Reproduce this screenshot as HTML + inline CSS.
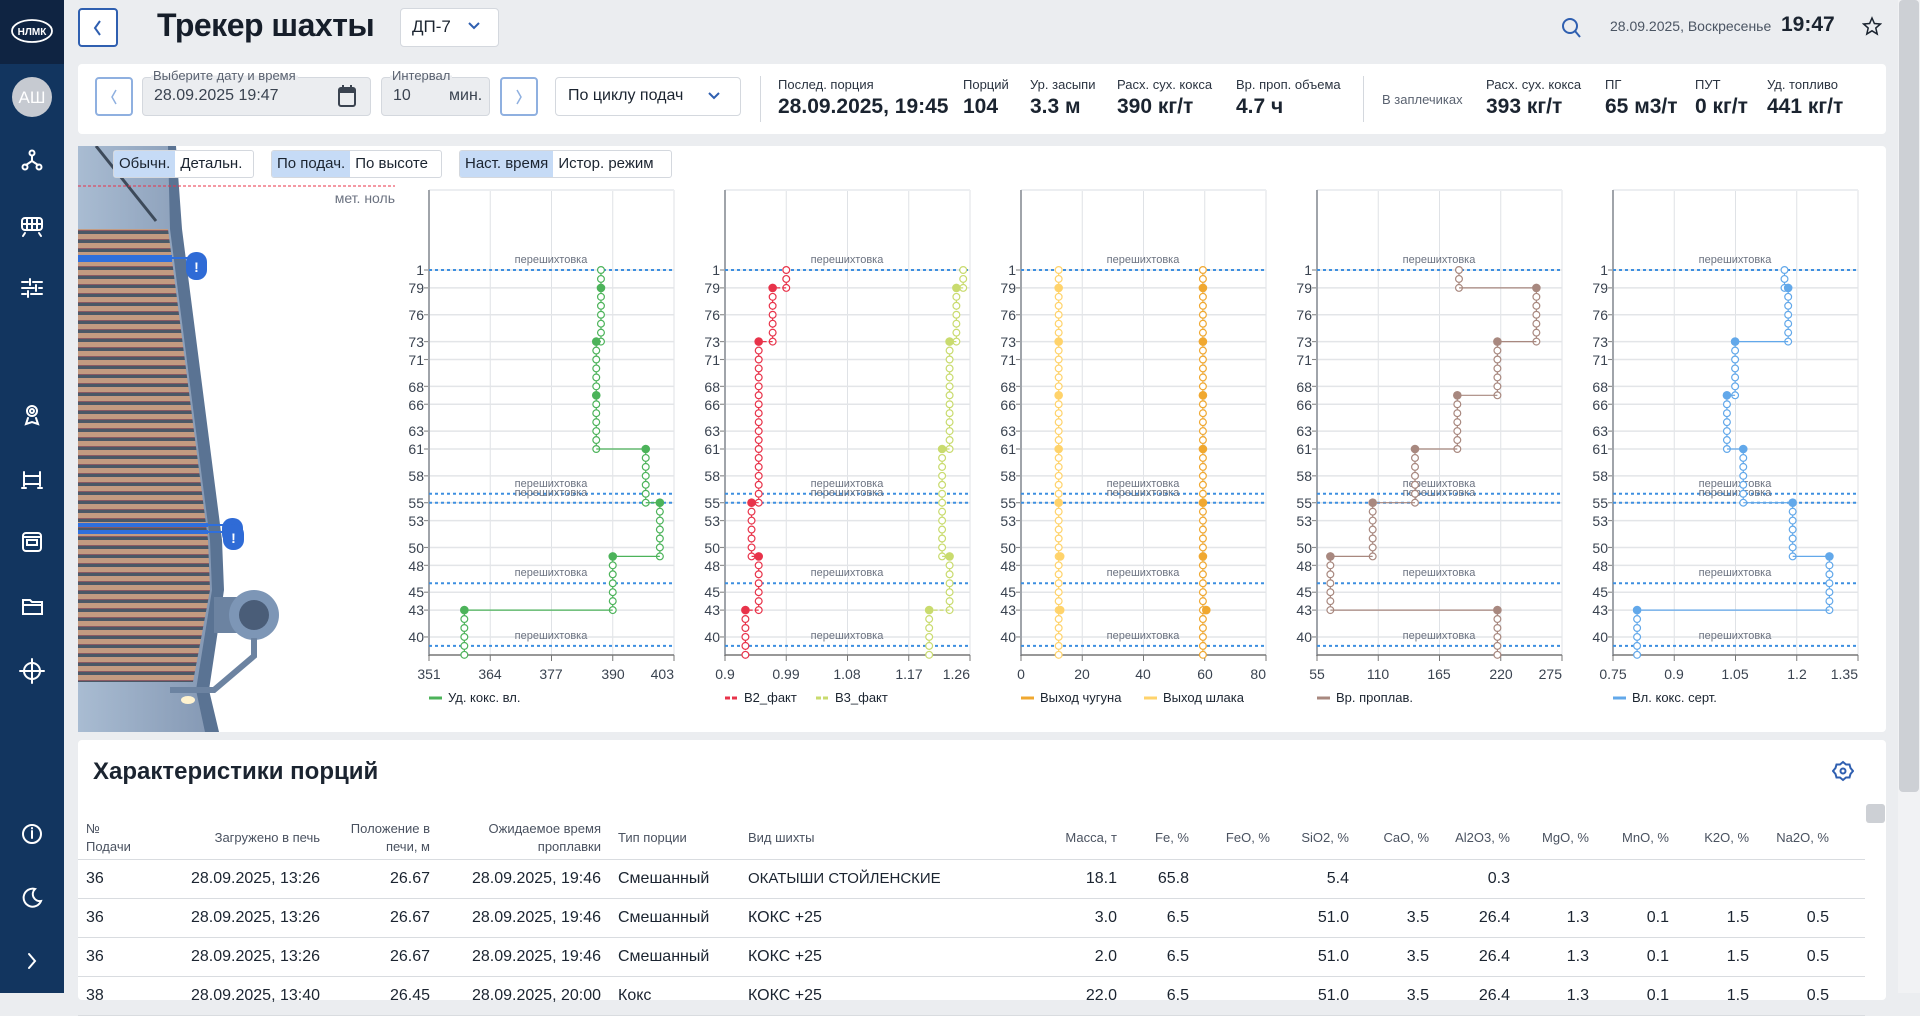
<!DOCTYPE html>
<html><head><meta charset="utf-8">
<style>
*{box-sizing:border-box;margin:0;padding:0}
body{width:1920px;height:993px;overflow:hidden;background:#ebedf0;font-family:"Liberation Sans Narrow","Liberation Sans",sans-serif;color:#1b2430;position:relative}
.abs{position:absolute}
.side{left:0;top:0;width:64px;height:993px;background:#12355f}
.logo{left:0;top:0;width:64px;height:64px;background:#0f2442}
.card{background:#fff;border-radius:4px}
.btnb{border:2px solid #2f5fb0;border-radius:4px;background:#fff}
.lbl{font-size:13px;color:#2a3340}
.val{font-size:21px;font-weight:bold;color:#1b2430}
.tg{position:absolute;top:150px;height:28px;border:1px solid #d4d8de;border-radius:3px;background:#fff;font-size:15px;display:flex;overflow:hidden;z-index:2}
.tg span{padding:0 5px;line-height:26px;white-space:nowrap}
.tg span.on{background:#c6dbf6}
th,td{font-weight:normal;white-space:nowrap;overflow:hidden}
.tbl{position:absolute;left:78px;top:817px;width:1787px;border-collapse:collapse;table-layout:fixed}
.tbl th{font-size:13px;color:#4a5260;height:42px;border-bottom:1px solid #d9dce0;vertical-align:middle;line-height:18px}
.tbl td{font-size:16px;height:39px;border-bottom:1px solid #d9dce0}
.r{text-align:right}.l{text-align:left}
</style></head><body>
<div class="abs side"></div>
<div class="abs logo"></div>
<svg class="abs" style="left:0;top:0" width="64" height="993">
<ellipse cx="32" cy="31" rx="20" ry="11" fill="none" stroke="#fff" stroke-width="1.8"/>
<text x="32" y="35" fill="#fff" font-size="10" font-weight="bold" text-anchor="middle" font-family="Liberation Sans">НЛМК</text>
<circle cx="32" cy="97" r="20" fill="#c6cad1"/>
<text x="32" y="103" fill="#fff" font-size="17" text-anchor="middle" font-family="Liberation Sans">АШ</text>
<g stroke="#fff" stroke-width="2" fill="none" stroke-linecap="round">
<circle cx="32" cy="153" r="2.5"/><circle cx="25" cy="167" r="2.5"/><circle cx="39" cy="167" r="2.5"/><path d="M32 156v5l-6 4M32 161l6 4"/>
<rect x="22" y="218" width="20" height="12" rx="3"/><path d="M22 224h20M27 218v12M32 218v12M37 218v12M25 233l-2 3M39 233l2 3"/>
<path d="M22 282h6M33 282h9M22 288h12M39 288h3M22 294h4M31 294h11M30 279v6M36 285v6M28 291v6"/>
<circle cx="32" cy="411" r="5"/><circle cx="32" cy="411" r="2"/><path d="M28 418l-2 6 6-2 6 2-2-6"/>
<path d="M24 472v14M40 472v14M24 476h16M24 484h16M22 488h4M38 488h4"/>
<rect x="23" y="533" width="18" height="18" rx="3"/><rect x="27" y="540" width="10" height="5"/><path d="M23 537h18"/>
<path d="M23 600h7l2 2h10v12H23z M23 605h19"/>
<circle cx="32" cy="671" r="8"/><path d="M32 659v24M20 671h24"/>
<circle cx="32" cy="834" r="9"/><path d="M32 831v7M32 828v0.5"/>
<path d="M35 889a9 9 0 1 0 6 12a7 7 0 0 1-6-12z"/>
<path d="M29 954l6 7-6 7"/>
</g></svg>

<div class="abs btnb" style="left:78px;top:8px;width:40px;height:39px"></div>
<svg class="abs" style="left:78px;top:8px" width="40" height="39"><path d="M22 13l-5 7 5 7" stroke="#2f5fb0" stroke-width="2" fill="none"/></svg>
<div class="abs" style="left:157px;top:7px;font-size:32px;font-weight:bold;color:#161e2a;letter-spacing:-0.5px">Трекер шахты</div>
<div class="abs card" style="left:400px;top:8px;width:99px;height:39px;border:1px solid #d4d8de"></div>
<div class="abs" style="left:412px;top:17px;font-size:17px">ДП-7</div>
<svg class="abs" style="left:466px;top:20px" width="16" height="12"><path d="M3 3l5 5 5-5" stroke="#2f5fb0" stroke-width="2" fill="none"/></svg>
<svg class="abs" style="left:1560px;top:16px" width="24" height="24"><circle cx="10" cy="10" r="7" stroke="#2f5fb0" stroke-width="2" fill="none"/><path d="M15 15l5 6" stroke="#2f5fb0" stroke-width="2"/></svg>
<div class="abs" style="left:1610px;top:18px;font-size:14px;color:#4b5563">28.09.2025, Воскресенье</div>
<div class="abs" style="left:1781px;top:13px;font-size:21px;font-weight:bold">19:47</div>
<svg class="abs" style="left:1862px;top:16px" width="20" height="20"><path d="M10 2l2.4 5.5 6 .5-4.6 4 1.4 6-5.2-3.2-5.2 3.2 1.4-6-4.6-4 6-.5z" fill="none" stroke="#1b2430" stroke-width="1.5"/></svg>
<div class="abs" style="left:1898px;top:0;width:22px;height:993px;background:#f1f2f4"></div>
<div class="abs" style="left:1899px;top:0;width:20px;height:792px;background:#cdd0d5;border-radius:4px"></div>

<div class="abs card" style="left:78px;top:64px;width:1808px;height:70px"></div>
<div class="abs" style="left:95px;top:77px;width:38px;height:39px;border:2px solid #8fb0e0;border-radius:4px"></div>
<svg class="abs" style="left:95px;top:77px" width="38" height="39"><path d="M21 13l-4 7 4 7" stroke="#8fb0e0" stroke-width="1.5" fill="none"/></svg>
<div class="abs" style="left:142px;top:77px;width:229px;height:39px;background:#ebedf0;border:1px solid #d4d8de;border-radius:4px"></div>
<div class="abs" style="left:151px;top:68px;font-size:13px;color:#5a6270;background:linear-gradient(#fff 50%,#ebedf0 50%);padding:0 2px">Выберите дату и время</div>
<div class="abs" style="left:154px;top:87px;font-size:16px;color:#3a4350">28.09.2025 19:47</div>
<svg class="abs" style="left:337px;top:84px" width="20" height="24"><rect x="2" y="4" width="16" height="18" rx="2" fill="none" stroke="#3a4350" stroke-width="2"/><rect x="2" y="4" width="16" height="5" fill="#3a4350"/><path d="M6 1v5M14 1v5" stroke="#3a4350" stroke-width="2"/></svg>
<div class="abs" style="left:381px;top:77px;width:109px;height:39px;background:#ebedf0;border:1px solid #d4d8de;border-radius:4px"></div>
<div class="abs" style="left:390px;top:68px;font-size:13px;color:#5a6270;background:linear-gradient(#fff 50%,#ebedf0 50%);padding:0 2px">Интервал</div>
<div class="abs" style="left:393px;top:87px;font-size:16px;color:#3a4350">10</div>
<div class="abs" style="left:449px;top:87px;font-size:16px;color:#3a4350">мин.</div>
<div class="abs" style="left:500px;top:77px;width:38px;height:39px;border:2px solid #8fb0e0;border-radius:4px"></div>
<svg class="abs" style="left:500px;top:77px" width="38" height="39"><path d="M17 13l4 7-4 7" stroke="#8fb0e0" stroke-width="1.5" fill="none"/></svg>
<div class="abs" style="left:555px;top:77px;width:186px;height:39px;border:1px solid #d4d8de;border-radius:4px"></div>
<div class="abs" style="left:568px;top:87px;font-size:16px">По циклу подач</div>
<svg class="abs" style="left:706px;top:90px" width="16" height="12"><path d="M3 3l5 5 5-5" stroke="#2f5fb0" stroke-width="2" fill="none"/></svg>
<div class="abs" style="left:760px;top:76px;width:1px;height:46px;background:#d4d8de"></div>
<div class="abs lbl" style="left:778px;top:77px">Послед. порция</div>
<div class="abs val" style="left:778px;top:95px">28.09.2025, 19:45</div>
<div class="abs lbl" style="left:963px;top:77px">Порций</div><div class="abs val" style="left:963px;top:95px">104</div>
<div class="abs lbl" style="left:1030px;top:77px">Ур. засыпи</div><div class="abs val" style="left:1030px;top:95px">3.3 м</div>
<div class="abs lbl" style="left:1117px;top:77px">Расх. сух. кокса</div><div class="abs val" style="left:1117px;top:95px">390 кг/т</div>
<div class="abs lbl" style="left:1236px;top:77px">Вр. проп. объема</div><div class="abs val" style="left:1236px;top:95px">4.7 ч</div>
<div class="abs" style="left:1363px;top:76px;width:1px;height:46px;background:#d4d8de"></div>
<div class="abs" style="left:1382px;top:92px;font-size:13px;color:#5a6270">В заплечиках</div>
<div class="abs lbl" style="left:1486px;top:77px">Расх. сух. кокса</div><div class="abs val" style="left:1486px;top:95px">393 кг/т</div>
<div class="abs lbl" style="left:1605px;top:77px">ПГ</div><div class="abs val" style="left:1605px;top:95px">65 м3/т</div>
<div class="abs lbl" style="left:1695px;top:77px">ПУТ</div><div class="abs val" style="left:1695px;top:95px">0 кг/т</div>
<div class="abs lbl" style="left:1767px;top:77px">Уд. топливо</div><div class="abs val" style="left:1767px;top:95px">441 кг/т</div>

<div class="abs card" style="left:78px;top:146px;width:1808px;height:586px"></div>
<svg class="abs" style="left:0;top:0" width="1920" height="993" id="cv">
<defs>
<pattern id="st" width="20" height="9" patternUnits="userSpaceOnUse"><rect width="20" height="9" fill="#4b5866"/><rect y="0" width="20" height="5" fill="#c39b81"/><rect y="5" width="20" height="1" fill="#8a5a62"/></pattern>
<linearGradient id="sh" x1="0" x2="1"><stop offset="0" stop-color="#a9bcd2"/><stop offset="1" stop-color="#8296b2"/></linearGradient>
<clipPath id="fc"><rect x="78" y="146" width="330" height="586"/></clipPath>
</defs>
<g clip-path="url(#fc)">
<polygon points="78,146 172,146 178,229 218,540 220,590 205,690 215,732 78,732" fill="url(#sh)"/>
<polygon points="168,146 176,146 182,229 222,540 224,590 209,690 219,732 205,732 196,690 212,590 210,540 170,229" fill="#5a7393"/>
<path d="M96 146l60 75" stroke="#3d4a5a" stroke-width="3"/>
<polygon points="78,229 168,229 208,540 210,590 193,682 78,682" fill="url(#st)"/>
<rect x="78" y="255" width="94" height="7" fill="#2f6fdc"/>
<path d="M170 258h20" stroke="#2f6fdc" stroke-width="2"/>
<rect x="186" y="252" width="21" height="28" rx="10" fill="#2f6bd6"/>
<text x="196.5" y="272" fill="#fff" font-size="14" font-weight="bold" text-anchor="middle" font-family="Liberation Sans">!</text>
<rect x="78" y="523" width="130" height="4" fill="#2f6fdc"/><rect x="78" y="530" width="130" height="4" fill="#2f6fdc"/>
<path d="M206 525h20M206 532h20" stroke="#2f6fdc" stroke-width="2"/>
<rect x="222" y="518" width="21" height="26" rx="10" fill="#2f6bd6"/>
<rect x="223" y="524" width="21" height="26" rx="10" fill="#2f6bd6"/>
<text x="233.5" y="543" fill="#fff" font-size="14" font-weight="bold" text-anchor="middle" font-family="Liberation Sans">!</text>
<rect x="214" y="597" width="40" height="36" fill="#6c83a1"/>
<circle cx="254" cy="615" r="25" fill="#7d96b6"/><circle cx="254" cy="615" r="15" fill="#4a5d78"/>
<path d="M254 638v18l-40 34h-44" stroke="#6c83a1" stroke-width="6" fill="none"/>
<ellipse cx="188" cy="700" rx="7" ry="4" fill="#fff3d0"/>
</g>
<path d="M78 186H395" stroke="#e8334a" stroke-width="1" stroke-dasharray="3 2"/>
<text x="395" y="203" font-size="14" fill="#6b7280" text-anchor="end" font-family="Liberation Sans">мет. ноль</text>
<g id="grid"></g>
<g font-family="Liberation Sans" font-size="14" fill="#3a4350" text-anchor="end">
<text><tspan x="424" y="275">1</tspan><tspan x="424" y="293">79</tspan><tspan x="424" y="320">76</tspan><tspan x="424" y="347">73</tspan><tspan x="424" y="365">71</tspan><tspan x="424" y="392">68</tspan><tspan x="424" y="410">66</tspan><tspan x="424" y="436">63</tspan><tspan x="424" y="454">61</tspan><tspan x="424" y="481">58</tspan><tspan x="424" y="508">55</tspan><tspan x="424" y="526">53</tspan><tspan x="424" y="553">50</tspan><tspan x="424" y="571">48</tspan><tspan x="424" y="597">45</tspan><tspan x="424" y="615">43</tspan><tspan x="424" y="642">40</tspan></text>
<text><tspan x="720" y="275">1</tspan><tspan x="720" y="293">79</tspan><tspan x="720" y="320">76</tspan><tspan x="720" y="347">73</tspan><tspan x="720" y="365">71</tspan><tspan x="720" y="392">68</tspan><tspan x="720" y="410">66</tspan><tspan x="720" y="436">63</tspan><tspan x="720" y="454">61</tspan><tspan x="720" y="481">58</tspan><tspan x="720" y="508">55</tspan><tspan x="720" y="526">53</tspan><tspan x="720" y="553">50</tspan><tspan x="720" y="571">48</tspan><tspan x="720" y="597">45</tspan><tspan x="720" y="615">43</tspan><tspan x="720" y="642">40</tspan></text>
<text><tspan x="1016" y="275">1</tspan><tspan x="1016" y="293">79</tspan><tspan x="1016" y="320">76</tspan><tspan x="1016" y="347">73</tspan><tspan x="1016" y="365">71</tspan><tspan x="1016" y="392">68</tspan><tspan x="1016" y="410">66</tspan><tspan x="1016" y="436">63</tspan><tspan x="1016" y="454">61</tspan><tspan x="1016" y="481">58</tspan><tspan x="1016" y="508">55</tspan><tspan x="1016" y="526">53</tspan><tspan x="1016" y="553">50</tspan><tspan x="1016" y="571">48</tspan><tspan x="1016" y="597">45</tspan><tspan x="1016" y="615">43</tspan><tspan x="1016" y="642">40</tspan></text>
<text><tspan x="1312" y="275">1</tspan><tspan x="1312" y="293">79</tspan><tspan x="1312" y="320">76</tspan><tspan x="1312" y="347">73</tspan><tspan x="1312" y="365">71</tspan><tspan x="1312" y="392">68</tspan><tspan x="1312" y="410">66</tspan><tspan x="1312" y="436">63</tspan><tspan x="1312" y="454">61</tspan><tspan x="1312" y="481">58</tspan><tspan x="1312" y="508">55</tspan><tspan x="1312" y="526">53</tspan><tspan x="1312" y="553">50</tspan><tspan x="1312" y="571">48</tspan><tspan x="1312" y="597">45</tspan><tspan x="1312" y="615">43</tspan><tspan x="1312" y="642">40</tspan></text>
<text><tspan x="1608" y="275">1</tspan><tspan x="1608" y="293">79</tspan><tspan x="1608" y="320">76</tspan><tspan x="1608" y="347">73</tspan><tspan x="1608" y="365">71</tspan><tspan x="1608" y="392">68</tspan><tspan x="1608" y="410">66</tspan><tspan x="1608" y="436">63</tspan><tspan x="1608" y="454">61</tspan><tspan x="1608" y="481">58</tspan><tspan x="1608" y="508">55</tspan><tspan x="1608" y="526">53</tspan><tspan x="1608" y="553">50</tspan><tspan x="1608" y="571">48</tspan><tspan x="1608" y="597">45</tspan><tspan x="1608" y="615">43</tspan><tspan x="1608" y="642">40</tspan></text>
</g>
<g font-family="Liberation Sans" font-size="14" fill="#3a4350" text-anchor="middle">
<text x="429" y="679">351</text><text x="490" y="679">364</text><text x="551" y="679">377</text><text x="613" y="679">390</text><text x="674" y="679" text-anchor="end">403</text>
<text x="725" y="679">0.9</text><text x="786" y="679">0.99</text><text x="847" y="679">1.08</text><text x="909" y="679">1.17</text><text x="970" y="679" text-anchor="end">1.26</text>
<text x="1021" y="679">0</text><text x="1082" y="679">20</text><text x="1143" y="679">40</text><text x="1205" y="679">60</text><text x="1266" y="679" text-anchor="end">80</text>
<text x="1317" y="679">55</text><text x="1378" y="679">110</text><text x="1439" y="679">165</text><text x="1501" y="679">220</text><text x="1562" y="679" text-anchor="end">275</text>
<text x="1613" y="679">0.75</text><text x="1674" y="679">0.9</text><text x="1735" y="679">1.05</text><text x="1797" y="679">1.2</text><text x="1858" y="679" text-anchor="end">1.35</text>
</g>
<g font-family="Liberation Sans" font-size="11" fill="#6b7280" text-anchor="middle">
<text x="551" y="263">перешихтовка</text><text x="551" y="487">перешихтовка</text><text x="551" y="496">перешихтовка</text><text x="551" y="576">перешихтовка</text><text x="551" y="639">перешихтовка</text>
<text x="847" y="263">перешихтовка</text><text x="847" y="487">перешихтовка</text><text x="847" y="496">перешихтовка</text><text x="847" y="576">перешихтовка</text><text x="847" y="639">перешихтовка</text>
<text x="1143" y="263">перешихтовка</text><text x="1143" y="487">перешихтовка</text><text x="1143" y="496">перешихтовка</text><text x="1143" y="576">перешихтовка</text><text x="1143" y="639">перешихтовка</text>
<text x="1439" y="263">перешихтовка</text><text x="1439" y="487">перешихтовка</text><text x="1439" y="496">перешихтовка</text><text x="1439" y="576">перешихтовка</text><text x="1439" y="639">перешихтовка</text>
<text x="1735" y="263">перешихтовка</text><text x="1735" y="487">перешихтовка</text><text x="1735" y="496">перешихтовка</text><text x="1735" y="576">перешихтовка</text><text x="1735" y="639">перешихтовка</text>
</g>
<g font-family="Liberation Sans" font-size="13" fill="#1b2430">
<path d="M429 698h13" stroke="#4cb35a" stroke-width="3"/><text x="448" y="702">Уд. кокс. вл.</text>
<path d="M725 698h13" stroke="#e8334a" stroke-width="3" stroke-dasharray="5 2"/><text x="744" y="702">В2_факт</text>
<path d="M816 698h13" stroke="#c9db6e" stroke-width="3" stroke-dasharray="5 2"/><text x="835" y="702">В3_факт</text>
<path d="M1021 698h13" stroke="#f0a830" stroke-width="3"/><text x="1040" y="702">Выход чугуна</text>
<path d="M1144 698h13" stroke="#ffd36b" stroke-width="3"/><text x="1163" y="702">Выход шлака</text>
<path d="M1317 698h13" stroke="#a8887f" stroke-width="3"/><text x="1336" y="702">Вр. проплав.</text>
<path d="M1613 698h13" stroke="#62a8ea" stroke-width="3"/><text x="1632" y="702">Вл. кокс. серт.</text>
</g>
<g id="data"></g>
</svg>
<div class="tg" style="left:113px;width:141px"><span class="on">Обычн.</span><span>Детальн.</span></div>
<div class="tg" style="left:271px;width:171px"><span class="on">По подач.</span><span>По высоте</span></div>
<div class="tg" style="left:459px;width:213px"><span class="on">Наст. время</span><span>Истор. режим</span></div>

<div class="abs card" style="left:78px;top:740px;width:1808px;height:260px"></div>
<div class="abs" style="left:93px;top:758px;font-size:24px;font-weight:bold">Характеристики порций</div>
<svg class="abs" style="left:1832px;top:760px" width="22" height="22"><path d="M11 2l3 2.5h3.5l1 3.5 2.5 3-2.5 3-1 3.5H14l-3 2.5-3-2.5H4.5l-1-3.5L1 11l2.5-3 1-3.5H8z" fill="none" stroke="#2f5fb0" stroke-width="2"/><circle cx="11" cy="11" r="2.5" fill="none" stroke="#2f5fb0" stroke-width="2"/></svg>
<div class="abs" style="left:1866px;top:804px;width:19px;height:19px;background:#cdd0d5;border-radius:3px"></div>
<table class="tbl">
<colgroup><col style="width:8px"><col style="width:70px"><col style="width:164px"><col style="width:110px"><col style="width:171px"><col style="width:17px"><col style="width:130px"><col style="width:210px"><col style="width:159px"><col style="width:72px"><col style="width:81px"><col style="width:79px"><col style="width:80px"><col style="width:81px"><col style="width:79px"><col style="width:80px"><col style="width:80px"><col style="width:80px"><col style="width:36px"></colgroup>
<tr><th></th><th class="l">№<br>Подачи</th><th class="r">Загружено в печь</th><th class="r">Положение в<br>печи, м</th><th class="r">Ожидаемое время<br>проплавки</th><th></th><th class="l">Тип порции</th><th class="l">Вид шихты</th><th class="r">Масса, т</th><th class="r">Fe, %</th><th class="r">FeO, %</th><th class="r">SiO2, %</th><th class="r">CaO, %</th><th class="r">Al2O3, %</th><th class="r">MgO, %</th><th class="r">MnO, %</th><th class="r">K2O, %</th><th class="r">Na2O, %</th><th></th></tr>
<tr><td></td><td>36</td><td class="r">28.09.2025, 13:26</td><td class="r">26.67</td><td class="r">28.09.2025, 19:46</td><td></td><td>Смешанный</td><td style="font-size:15px">ОКАТЫШИ СТОЙЛЕНСКИЕ</td><td class="r">18.1</td><td class="r">65.8</td><td></td><td class="r">5.4</td><td></td><td class="r">0.3</td><td></td><td></td><td></td><td></td><td></td></tr>
<tr><td></td><td>36</td><td class="r">28.09.2025, 13:26</td><td class="r">26.67</td><td class="r">28.09.2025, 19:46</td><td></td><td>Смешанный</td><td>КОКС +25</td><td class="r">3.0</td><td class="r">6.5</td><td></td><td class="r">51.0</td><td class="r">3.5</td><td class="r">26.4</td><td class="r">1.3</td><td class="r">0.1</td><td class="r">1.5</td><td class="r">0.5</td><td></td></tr>
<tr><td></td><td>36</td><td class="r">28.09.2025, 13:26</td><td class="r">26.67</td><td class="r">28.09.2025, 19:46</td><td></td><td>Смешанный</td><td>КОКС +25</td><td class="r">2.0</td><td class="r">6.5</td><td></td><td class="r">51.0</td><td class="r">3.5</td><td class="r">26.4</td><td class="r">1.3</td><td class="r">0.1</td><td class="r">1.5</td><td class="r">0.5</td><td></td></tr>
<tr><td></td><td>38</td><td class="r">28.09.2025, 13:40</td><td class="r">26.45</td><td class="r">28.09.2025, 20:00</td><td></td><td>Кокс</td><td>КОКС +25</td><td class="r">22.0</td><td class="r">6.5</td><td></td><td class="r">51.0</td><td class="r">3.5</td><td class="r">26.4</td><td class="r">1.3</td><td class="r">0.1</td><td class="r">1.5</td><td class="r">0.5</td><td></td></tr>
</table>
<script>
(function(){
var NS="http://www.w3.org/2000/svg";
function el(p,t,a){var e=document.createElementNS(NS,t);for(var k in a)e.setAttribute(k,a[k]);p.appendChild(e);return e;}
var g=document.getElementById('grid'),d=document.getElementById('data');
var ST=[429,725,1021,1317,1613],W=245;
var LI=[0,2,5,8,10,13,15,18,20,23,26,28,31,33,36,38,41];
function Y(i){return 270+i*8.95;}
ST.forEach(function(s){
 for(var k=1;k<=4;k++)el(g,'line',{x1:s+k*W/4,x2:s+k*W/4,y1:190,y2:655,stroke:'#dfe2e6','stroke-width':1});
 el(g,'line',{x1:s,x2:s+W,y1:190,y2:190,stroke:'#eceef1','stroke-width':2});
 LI.forEach(function(i){el(g,'line',{x1:s-5,x2:s+W,y1:Y(i),y2:Y(i),stroke:'#e3e5e8','stroke-width':1.5});el(g,'line',{x1:s-5,x2:s,y1:Y(i),y2:Y(i),stroke:'#888','stroke-width':1});});
 el(g,'line',{x1:s,x2:s,y1:190,y2:656,stroke:'#a0a4aa','stroke-width':2});
 el(g,'line',{x1:s,x2:s+W,y1:655,y2:655,stroke:'#777','stroke-width':1.5});
 for(var k=0;k<=4;k++)el(g,'line',{x1:s+k*W/4,x2:s+k*W/4,y1:655,y2:661,stroke:'#777','stroke-width':1});
 [0,25,26,35,42].forEach(function(i){el(g,'line',{x1:s,x2:s+W,y1:Y(i),y2:Y(i),stroke:'#3d8fe0','stroke-width':2,'stroke-dasharray':'3 3'});});
});
var series=[
 [0,351,403,'#4cb35a',[[387.5,0,8,0],[386.5,8,20,1],[397,20,26,1],[400,26,32,1],[390,32,38,1],[358.5,38,43,1]],[[387.5,2],[386.5,14]],0],
 [1,0.9,1.26,'#e8334a',[[0.99,0,2,0],[0.97,2,8,1],[0.9495,8,26,1],[0.939,26,32,1],[0.9495,32,38,1],[0.93,38,43,1]],[],1],
 [1,0.9,1.26,'#c9db6e',[[1.25,0,2,0],[1.24,2,8,1],[1.23,8,20,1],[1.219,20,32,1],[1.23,32,38,1],[1.2,38,43,1]],[],1],
 [2,0,80,'#ffd36b',[[12.3,0,43,0]],[[12.3,2],[12.3,8],[12.3,14],[12.3,20],[12.3,26],[12.8,32],[12.8,38]],0],
 [2,0,80,'#f0a830',[[59.4,0,43,0]],[[59.4,2],[59.4,8],[59.4,14],[59.4,20],[59.4,26],[59.4,32],[60.5,38]],0],
 [3,55,275,'#a8887f',[[182.5,0,2,0],[252,2,8,1],[217,8,14,1],[181,14,20,1],[143,20,26,1],[105,26,32,1],[67,32,38,1],[217,38,43,1]],[],0],
 [4,0.75,1.35,'#62a8ea',[[1.17,0,2,0],[1.179,2,8,1],[1.049,8,14,1],[1.029,14,20,1],[1.069,20,26,1],[1.19,26,32,1],[1.28,32,38,1],[0.809,38,43,1]],[],0]
];
series.forEach(function(sr){
 var s=ST[sr[0]],mn=sr[1],mx=sr[2],c=sr[3],dash=sr[6]?'4 2':'none';
 function X(v){return s+(v-mn)/(mx-mn)*W;}
 var prev=null;
 sr[4].forEach(function(sg){
  var x=X(sg[0]);
  el(d,'line',{x1:x,x2:x,y1:Y(sg[1]),y2:Y(sg[2]),stroke:c,'stroke-width':1.2,'stroke-dasharray':dash});
  if(prev!==null)el(d,'line',{x1:prev,x2:x,y1:Y(sg[1]),y2:Y(sg[1]),stroke:c,'stroke-width':1.2,'stroke-dasharray':dash});
  for(var i=sg[1];i<=sg[2];i++){if(sg[3]&&i==sg[1])continue;el(d,'circle',{cx:x,cy:Y(i),r:3.4,fill:'#fff',stroke:c,'stroke-width':1.2});}
  prev=x;
 });
 sr[4].forEach(function(sg){if(sg[3])el(d,'circle',{cx:X(sg[0]),cy:Y(sg[1]),r:4.3,fill:c});});
 sr[5].forEach(function(p){el(d,'circle',{cx:X(p[0]),cy:Y(p[1]),r:4.3,fill:c});});
});
})();
</script>
</body></html>
